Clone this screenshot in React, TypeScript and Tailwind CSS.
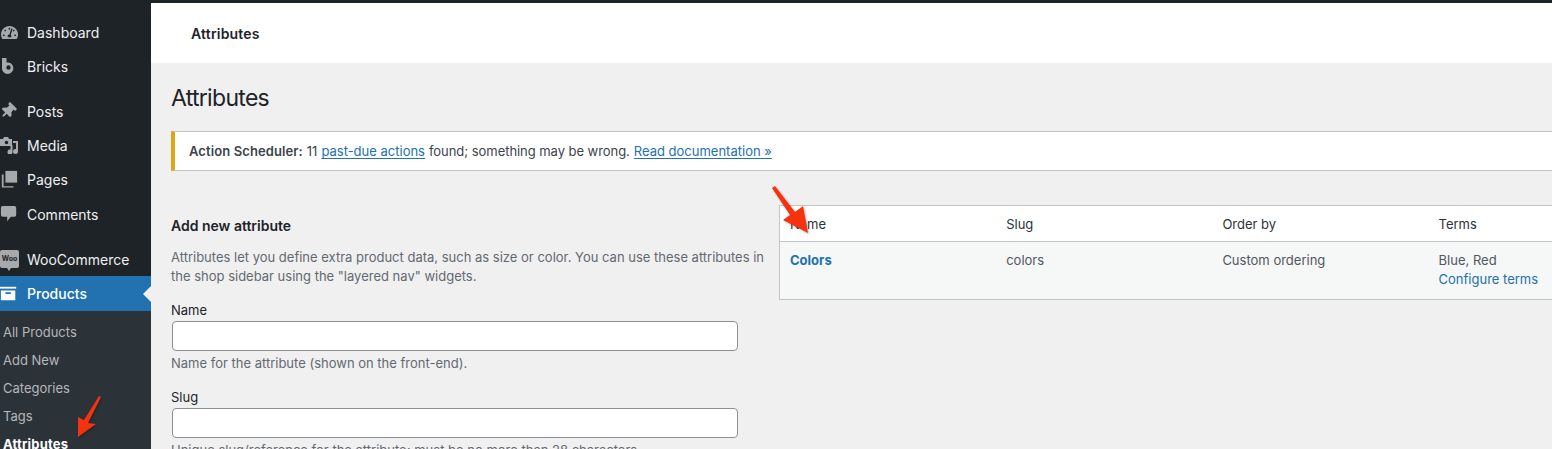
import { FaTachometerAlt, FaThumbtack } from 'react-icons/fa';
import type { ReactNode } from 'react';

const font = "font-['Inter','Liberation_Sans',sans-serif]";

function MediaIcon() {
  return (
    <svg viewBox="0 0 18 18" className="w-[18px] h-[18px]" fill="currentColor">
      <path d="M0 3h3l1-2h4l1 2h3v7H0z M6.500 4.700a1.800 1.800 0 1 0 0 3.600 1.800 1.800 0 0 0 0-3.600z" fillRule="evenodd" />
      <path d="M13 5h5v10.500a2.500 2.500 0 1 1-2-2.400V7h-3z" />
      <path d="M12.500 9v7a2.500 2.500 0 1 1-2-2.400V9z" />
    </svg>
  );
}

function PagesIcon() {
  return (
    <svg viewBox="0 0 20 20" className="w-[18px] h-[18px]" fill="currentColor">
      <path d="M6 1h13v13H6z" />
      <path d="M2 5h2v13h11v1.500H2z" />
    </svg>
  );
}

function CommentIcon() {
  return (
    <svg viewBox="0 0 20 20" className="w-[18px] h-[18px]" fill="currentColor">
      <path d="M3 1h13a2 2 0 0 1 2 2v8a2 2 0 0 1-2 2h-4l-4 5v-5H3a2 2 0 0 1-2-2V3a2 2 0 0 1 2-2z" />
    </svg>
  );
}

function BricksIcon() {
  return (
    <svg viewBox="0 0 18 18" className="w-[18px] h-[18px]" fill="currentColor">
      <path d="M2 1h4.500v4.600A5.700 5.700 0 1 1 2 10.500z M8.500 8.300a2.200 2.200 0 1 0 0 4.400 2.200 2.200 0 0 0 0-4.400z" fillRule="evenodd" />
    </svg>
  );
}

function ArchiveIcon() {
  return (
    <svg viewBox="0 0 20 20" className="w-[18px] h-[18px]" fill="currentColor">
      <path d="M0 2h18v2H0z" />
      <path d="M1 6h16v11H1z M6 8v2h6V8z" fillRule="evenodd" />
    </svg>
  );
}

function WooIcon() {
  return (
    <span className="relative w-[19px] h-[18px] rounded-[2px] bg-[#a7aaad] text-[#1d2327] text-[7px] font-bold flex items-center justify-center">
      Woo
      <span className="absolute left-[7px] -bottom-[3px] border-x-[2px] border-t-[3px] border-x-transparent border-t-[#a7aaad]" />
    </span>
  );
}

function MenuItem({ icon, label, className = '' }: { icon: ReactNode; label: string; className?: string }) {
  return (
    <div className={`flex items-center h-[34px] text-[14px] text-[#f0f0f1] ${className}`}>
      <span className="w-[27px] flex items-center text-[#a7aaad]">{icon}</span>
      {label}
    </div>
  );
}

function Sidebar() {
  return (
    <aside className="w-[151px] shrink-0 bg-[#1d2327]">
      <div className="pt-[12px]">
        <MenuItem icon={<FaTachometerAlt className="w-[17px] h-[17px] ml-px" />} label="Dashboard" />
        <MenuItem icon={<BricksIcon />} label="Bricks" />
        <MenuItem icon={<FaThumbtack className="w-[16px] h-[16px] rotate-45" />} label="Posts" className="mt-[11px]" />
        <MenuItem icon={<MediaIcon />} label="Media" />
        <MenuItem icon={<PagesIcon />} label="Pages" />
        <MenuItem icon={<CommentIcon />} label="Comments" className="mt-px" />
        <MenuItem icon={<WooIcon />} label="WooCommerce" className="mt-[11px]" />
      </div>
      <div className="relative flex items-center h-[35px] bg-[#2271b1] text-[14px] text-white font-medium">
        <span className="w-[27px] flex items-center">
          <ArchiveIcon />
        </span>
        Products
        <span className="absolute right-0 top-[10px] border-y-[8px] border-r-[8px] border-y-transparent border-r-[#f0f0f1]" />
      </div>
      <div className="bg-[#2c3338] h-[141px] pt-[8px] pl-[3px] text-[13px] text-[#b5b8bb]">
        <div className="h-[28px] flex items-center">All Products</div>
        <div className="h-[28px] flex items-center">Add New</div>
        <div className="h-[28px] flex items-center">Categories</div>
        <div className="h-[28px] flex items-center">Tags</div>
        <div className="h-[28px] flex items-center text-white font-bold tracking-[0.2px]">Attributes</div>
      </div>
    </aside>
  );
}

function Field({ label, help, className = '' }: { label: string; help: string; className?: string }) {
  return (
    <div className={className}>
      <label className="block text-[13px] leading-[19px] text-[#1d2327]">{label}</label>
      <input className="block mt-px ml-px w-[566px] h-[30px] bg-white border border-[#8c8f94] rounded-[4px]" />
      <p className="mt-[3px] text-[13px] leading-[19px] text-[#646970]">{help}</p>
    </div>
  );
}

function AttributesTable() {
  return (
    <div className="flex-1 min-w-0 mt-[34px] h-[95px] border border-r-0 border-[#c3c4c7] text-[13px]">
      <div className="grid grid-cols-[216.200px_216.200px_216.200px_1fr] h-[36px] pt-[2px] items-center bg-white border-b border-[#c3c4c7] text-[#2c3338] pl-[10px]">
        <span>Name</span>
        <span>Slug</span>
        <span>Order by</span>
        <span>Terms</span>
      </div>
      <div className="grid grid-cols-[216.200px_216.200px_216.200px_1fr] h-[57px] bg-[#f6f7f7] text-[#50575e] pl-[10px] pt-[9px] leading-[19px]">
        <a className="font-bold text-[#2271b1]">Colors</a>
        <span>colors</span>
        <span>Custom ordering</span>
        <div>
          <div>Blue, Red</div>
          <a className="text-[#2271b1]">Configure terms</a>
        </div>
      </div>
    </div>
  );
}

export default function App() {
  return (
    <div className={`relative h-[449px] overflow-hidden bg-[#f0f0f1] flex flex-col ${font}`}>
      <div className="h-[3px] shrink-0 bg-[#1d2327]" />
      <div className="flex flex-1 min-h-0">
        <Sidebar />
        <main className="flex-1 min-w-0">
          <header className="h-[60px] bg-white flex items-center pl-[40px] text-[14px] tracking-[0.2px] font-semibold text-[#1d2327]">
            Attributes
          </header>
          <div className="pl-[20px]">
            <h1 className="mt-[20px] text-[23px] leading-[30px] tracking-[-0.7px] text-[#1d2327]">Attributes</h1>
            <div className="mt-[18px] h-[40px] pt-[2px] flex items-center bg-white border border-[#c3c4c7] border-l-[4px] border-l-[#dba617] pl-[14px] text-[13px] text-[#3c434a] border-r-0">
              <strong className="font-semibold tracking-[0.1px]">Action Scheduler:</strong>
              <span className="ml-1">11</span>
              <a className="ml-1 text-[#2271b1] underline underline-offset-2">past-due actions</a>
              <span className="ml-1 tracking-[-0.05px]">found; something may be wrong.</span>
              <a className="ml-1 text-[#2271b1] underline underline-offset-2">Read documentation »</a>
            </div>
            <div className="flex">
              <section className="w-[608px] shrink-0 pr-[14px]">
                <h2 className="mt-[46px] text-[14px] leading-[18px] font-semibold text-[#1d2327]">Add new attribute</h2>
                <p className="mt-[13px] text-[13px] leading-[19px] text-[#646970]">
                  Attributes let you define extra product data, such as size or color. You can use these attributes in the shop sidebar using the "layered nav" widgets.
                </p>
                <Field className="mt-[15px]" label="Name" help="Name for the attribute (shown on the front-end)." />
                <Field
                  className="mt-[15px]"
                  label="Slug"
                  help="Unique slug/reference for the attribute; must be no more than 28 characters."
                />
              </section>
              <AttributesTable />
            </div>
          </div>
        </main>
      </div>
      <svg className="absolute left-[770px] top-[185px] w-[42px] h-[52px] drop-shadow-[1px_1px_1px_rgba(0,0,0,0.3)]" viewBox="0 0 42 52">
        <path d="M2 3 L5 1 L25 27 L33 21 L38 48 L13 35 L20 30 Z" fill="#f6320f" />
      </svg>
      <svg className="absolute left-[74px] top-[395px] w-[30px] h-[46px] drop-shadow-[1px_1px_1px_rgba(0,0,0,0.3)]" viewBox="0 0 30 46">
        <path d="M25 1 L27 2 L14 28 L22 29 L4 42 L4 22 L10 25 Z" fill="#f6320f" />
      </svg>
    </div>
  );
}
